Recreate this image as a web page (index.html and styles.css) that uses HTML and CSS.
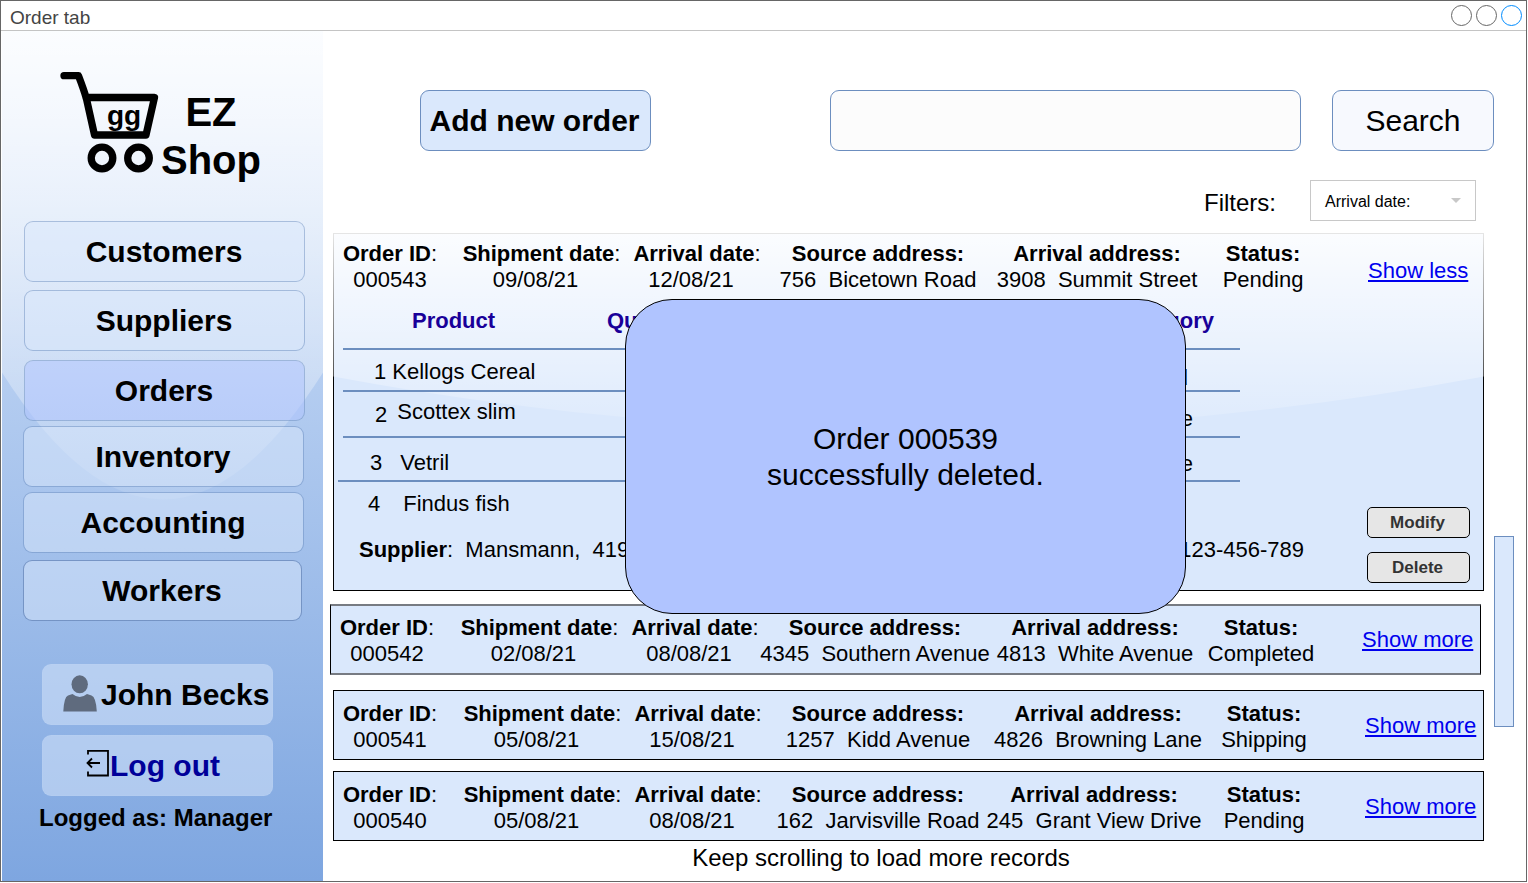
FILE: index.html
```
<!DOCTYPE html>
<html lang="en">
<head>
<meta charset="utf-8">
<title>Order tab</title>
<link rel="stylesheet" href="styles.css">
</head>
<body>
<div class="window">
  <header class="titlebar">
    <span class="title">Order tab</span>
    <div class="controls"><i class="dot"></i><i class="dot"></i><i class="dot active"></i></div>
  </header>
  <div class="content">
    <aside class="sidebar">
      <svg class="glass" viewBox="0 0 321 851" preserveAspectRatio="none">
        <defs><linearGradient id="shineA" x1="0" y1="0" x2="0" y2="1"><stop offset="0" stop-color="#fff" stop-opacity=".9"/><stop offset="1" stop-color="#fff" stop-opacity=".1"/></linearGradient></defs>
        <path d="M0 0H321V342Q160.500 596 0 342Z" fill="url(#shineA)"/>
      </svg>
      <div class="logo">
        <svg class="cart" width="101" height="110" viewBox="60 68 101 110">
          <g fill="none" stroke="#000" stroke-width="7.300" stroke-linecap="round" stroke-linejoin="round">
            <path d="M64 75.700H78.500Q84 90 86.500 99L94.500 135H146L154.500 97.500H86"/>
            <circle cx="102" cy="158" r="10.800"/><circle cx="138.500" cy="158" r="10.800"/>
          </g>
          <text x="107" y="125" class="cart-text">gg</text>
        </svg>
        <div class="brand">EZ<br>Shop</div>
      </div>
      <nav class="nav">
        <a class="nav-item">Customers</a>
        <a class="nav-item suppliers">Suppliers</a>
        <a class="nav-item current">Orders</a>
        <a class="nav-item inventory">Inventory</a>
        <a class="nav-item accounting">Accounting</a>
        <a class="nav-item workers">Workers</a>
      </nav>
      <div class="account">
        <div class="account-btn user">
          <svg width="36" height="38" viewBox="62 676 36 38"><g fill="#5f6b7e"><ellipse cx="79.700" cy="685.300" rx="8.200" ry="9"/><path d="M63.300 712.500Q64 698 68 696.500L72.500 695Q79.700 701 87 695L91.500 696.500Q96 698 96.800 712.500Z"/></g></svg>
          <span>John Becks</span>
        </div>
        <div class="account-btn logout">
          <svg width="24" height="28" viewBox="86 751.500 24 28"><g fill="none" stroke="#000" stroke-width="1.800"><path d="M88 756V752.400H108V777H88V773M100 764.500H87.500M92 760L87.500 764.500L92 769"/></g></svg>
          <span>Log out</span>
        </div>
        <div class="role">Logged as: Manager</div>
      </div>
    </aside>
    <main class="main">
      <div class="toolbar">
        <button class="add">Add new order</button>
        <div class="search-field"></div>
        <button class="search">Search</button>
      </div>
      <div class="filters">
        <span class="filters-label">Filters:</span>
        <div class="select"><span>Arrival date:</span><i class="caret"></i></div>
      </div>
      <div class="list-area">
        <div class="list">
          <section class="order expanded">
            <svg class="glass" viewBox="0 0 1151 358" preserveAspectRatio="none">
              <defs><linearGradient id="shineB" x1="0" y1="0" x2="0" y2="1"><stop offset="0" stop-color="#fff" stop-opacity=".9"/><stop offset="1" stop-color="#fff" stop-opacity=".1"/></linearGradient></defs>
              <path d="M0 0H1151V143.500Q575.500 251 0 143.500Z" fill="url(#shineB)"/>
            </svg>
            <div class="summary">
              <div class="cell id"><span><b>Order ID</b>:</span><span>000543</span></div>
              <div class="cell ship"><span><b>Shipment date</b>:</span><span>09/08/21</span></div>
              <div class="cell arr"><span><b>Arrival date</b>:</span><span>12/08/21</span></div>
              <div class="cell src"><b>Source address:</b><span>756&nbsp; Bicetown Road</span></div>
              <div class="cell dst"><b>Arrival address:</b><span>3908&nbsp; Summit Street</span></div>
              <div class="cell status"><b>Status:</b><span>Pending</span></div>
              <a class="toggle">Show less</a>
            </div>
            <div class="details">
              <div class="products">
                <div class="line head"><span class="h-product">Product</span><span class="h-qty">Quantity</span><span class="cat">Category</span></div>
                <div class="line r1"><span class="num">1</span><span class="name">Kellogs Cereal</span><span class="cat">Food</span></div>
                <div class="line r2"><span class="num">2</span><span class="name">Scottex slim</span><span class="cat">House</span></div>
                <div class="line r3"><span class="num">3</span><span class="name">Vetril</span><span class="cat">House</span></div>
                <div class="line r4"><span class="num">4</span><span class="name">Findus fish</span></div>
                <div class="supplier"><span><b>Supplier</b>:&nbsp; Mansmann,&nbsp; 419</span><span class="phone">123-456-789</span></div>
              </div>
              <div class="actions"><button class="action">Modify</button><button class="action">Delete</button></div>
            </div>
          </section>
          <section class="order second">
            <div class="summary">
              <div class="cell id"><span><b>Order ID</b>:</span><span>000542</span></div>
              <div class="cell ship"><span><b>Shipment date</b>:</span><span>02/08/21</span></div>
              <div class="cell arr"><span><b>Arrival date</b>:</span><span>08/08/21</span></div>
              <div class="cell src"><b>Source address:</b><span>4345&nbsp; Southern Avenue</span></div>
              <div class="cell dst"><b>Arrival address:</b><span>4813&nbsp; White Avenue</span></div>
              <div class="cell status"><b>Status:</b><span>Completed</span></div>
              <a class="toggle">Show more</a>
            </div>
          </section>
          <section class="order third">
            <div class="summary">
              <div class="cell id"><span><b>Order ID</b>:</span><span>000541</span></div>
              <div class="cell ship"><span><b>Shipment date</b>:</span><span>05/08/21</span></div>
              <div class="cell arr"><span><b>Arrival date</b>:</span><span>15/08/21</span></div>
              <div class="cell src"><b>Source address:</b><span>1257&nbsp; Kidd Avenue</span></div>
              <div class="cell dst"><b>Arrival address:</b><span>4826&nbsp; Browning Lane</span></div>
              <div class="cell status"><b>Status:</b><span>Shipping</span></div>
              <a class="toggle">Show more</a>
            </div>
          </section>
          <section class="order fourth">
            <div class="summary">
              <div class="cell id"><span><b>Order ID</b>:</span><span>000540</span></div>
              <div class="cell ship"><span><b>Shipment date</b>:</span><span>05/08/21</span></div>
              <div class="cell arr"><span><b>Arrival date</b>:</span><span>08/08/21</span></div>
              <div class="cell src"><b>Source address:</b><span>162&nbsp; Jarvisville Road</span></div>
              <div class="cell dst"><b>Arrival address:</b><span>245&nbsp; Grant View Drive</span></div>
              <div class="cell status"><b>Status:</b><span>Pending</span></div>
              <a class="toggle">Show more</a>
            </div>
          </section>
          <p class="more">Keep scrolling to load more records</p>
        </div>
        <div class="thumb"></div>
      </div>
    </main>
  </div>
  <div class="dialog">Order 000539<br>successfully deleted.</div>
</div>
</body>
</html>
```
FILE: styles.css
```
* { box-sizing: border-box; }
body { margin: 0; background: #fff; color: #000; font: 22px/26px "Liberation Sans", Arial, sans-serif; overflow: hidden; }
button { font: inherit; color: inherit; padding: 0; margin: 0; }

.window { position: relative; width: 1527px; height: 882px; border: 1px solid #666; display: flex; flex-direction: column; }
.titlebar { height: 30px; flex: none; border-bottom: 1px solid #c4c4c4; display: flex; justify-content: space-between; align-items: flex-start; padding: 4px 4px 0 9px; }
.title { font-size: 19px; color: #444; }
.controls { display: flex; gap: 4px; }
.dot { width: 21px; height: 21px; border: 1px solid #666; border-radius: 50%; }
.dot.active { border-color: #008cff; }
.content { flex: 1; display: flex; min-height: 0; }

.glass { position: absolute; left: 0; top: 0; width: 100%; height: 100%; }
.sidebar { position: relative; width: 321px; margin-left: 1px; flex: none; background: linear-gradient(#dae8fc, #7ea6e0); display: flex; flex-direction: column; }
.logo, .nav, .account { position: relative; }
.logo { display: flex; margin: 37px 0 0 58px; height: 110px; }
.cart-text { font-weight: bold; font-size: 28px; }
.brand { font-weight: bold; font-size: 40px; line-height: 48px; text-align: center; padding-top: 20px; }
.nav { display: flex; flex-direction: column; margin: 43px 0 0 22px; }
.nav-item { width: 281px; height: 61px; border: 1px solid rgba(108,142,191,.5); border-radius: 9px; background: rgba(218,232,252,.5); background-clip: padding-box; font-weight: bold; font-size: 30px; line-height: 60px; text-align: center; padding-right: 1px; }
.suppliers { margin-top: 8px; }
.current { margin-top: 9px; background-color: rgba(176,196,255,.5); }
.inventory { margin: 5px 0 0 -1px; }
.accounting { margin: 5px 0 0 -1px; }
.workers { margin: 7px 0 0 -1px; width: 279px; border-color: rgba(92,122,172,.6); }
.account { margin: 43px 0 0 40px; display: flex; flex-direction: column; width: 231px; }
.account-btn { height: 61px; border-radius: 9px; background: rgba(218,232,252,.5); border: 1px solid rgba(200,220,250,.15); display: flex; align-items: center; font-weight: bold; font-size: 30px; white-space: nowrap; }
.user { padding-left: 19px; }
.user svg, .logout svg { margin-top: -1px; }
.user span { margin-left: 3px; }
.logout { margin-top: 10px; padding-left: 43px; color: #000099; }
.logout svg { margin-top: -4px; }
.role { margin: 9px -10px 0 -3px; font-weight: bold; font-size: 24px; white-space: nowrap; }

.main { flex: 1; padding-top: 59px; min-width: 0; }
.toolbar { display: flex; margin-left: 97px; }
.toolbar > * { height: 61px; border: 1px solid #6c8ebf; border-radius: 9px; }
.add { width: 231px; background: #dae8fc; font-weight: bold; font-size: 30px; padding-right: 2px; }
.search-field { width: 471px; margin-left: 179px; background: #fcfcfc; }
.search { width: 162px; margin-left: 31px; background: #f7f9fe; font-size: 30px; }
.filters { display: flex; align-items: center; margin: 29px 0 0 881px; height: 41px; }
.filters-label { width: 106px; font-size: 24px; padding-top: 4px; }
.select { width: 166px; height: 41px; border: 1px solid #c8c8c8; display: flex; align-items: center; justify-content: space-between; padding: 3px 14px 0; font-size: 16px; }
.caret { border: 5px solid transparent; border-top-color: #c8c8c8; border-bottom: 0; margin-top: -4px; }

.list-area { display: flex; margin: 12px 0 0 10px; align-items: flex-start; }
.list { width: 1151px; }
.thumb { width: 20px; height: 191px; margin: 303px 0 0 10px; background: #dae8fc; border: 1px solid #6c8ebf; }
.order { position: relative; width: 1151px; height: 70px; border: 1px solid #000; background: #dae8fc; padding: 10px 0 0 9px; }
.expanded { height: 358px; padding-top: 7px; }
.expanded > .glass { left: -1px; top: -1px; width: 1151px; height: 358px; }
.second { height: 71px; margin: 13px 0 0 -3px; border-width: 2px 1px; border-color: #777b82 #000; padding-top: 9px; }
.third { margin-top: 15px; }
.fourth { margin-top: 11px; }
.summary { position: relative; display: flex; height: 52px; }
.cell { display: flex; flex: none; flex-direction: column; align-items: center; white-space: nowrap; }
.id { width: 94px; }
.ship { width: 158px; margin-left: 26.5px; }
.arr { width: 126px; margin-left: 13.5px; }
.ship span + span, .arr span + span { padding-right: 12px; }
.src { width: 172px; margin-left: 31px; }
.dst { width: 168px; margin-left: 50px; }
.status { width: 74px; margin-left: 45px; }
.toggle { margin: 12px 0 0 64px; color: #0000ee; text-decoration: underline; white-space: nowrap; }
.expanded .ship { margin-left: 25.5px; }
.expanded .src { margin-left: 32px; }
.expanded .dst { margin-left: 49px; }
.expanded .toggle { margin: 17px 0 0 68px; }
.fourth .dst { margin-left: 46px; }
.fourth .status { margin-left: 49px; }

.details { position: relative; display: flex; margin-left: -9px; padding-top: 15px; }
.products { width: 1033px; flex: none; }
.line { display: flex; align-items: flex-start; width: 897px; margin-left: 9px; border-bottom: 2px solid #6c8ebf; white-space: nowrap; }
.cat { margin-left: auto; }
.head { height: 42px; padding: 0 26px 0 69px; color: #190099; font-weight: bold; }
.h-product { width: 195px; }
.r1 { height: 42px; padding: 9px 52px 0 31px; }
.r1 .name { margin-left: 6px; }
.r1 .cat { margin-top: 6px; }
.r2 { height: 46px; padding: 10px 47px 0 32px; }
.r2 .name { margin: -3px 0 0 10px; }
.r2 .cat { margin-top: 4px; }
.r3 { height: 44px; width: 902px; margin-left: 4px; padding: 12px 47px 0 32px; }
.r3 .name { margin-left: 18px; }
.r3 .cat { margin-top: 1px; }
.r4 { height: 55px; padding: 9px 0 0 25px; border: 0; }
.r4 .name { margin-left: 23px; }
.supplier { display: flex; justify-content: space-between; margin-top: 0; padding: 0 63px 0 25px; white-space: nowrap; }
.actions { display: flex; flex-direction: column; gap: 14px; margin-top: 199px; }
.action { width: 103px; height: 31px; border: 1px solid #000; border-radius: 5px; background: #e6e6e6; color: #333; font-size: 17px; font-weight: bold; padding-right: 2px; }
.more { margin: 4px 0 0 -55px; text-align: center; font-size: 24px; }

.dialog { position: absolute; left: 624px; top: 298px; width: 561px; height: 315px; border: 1px solid #000; border-radius: 47px; background: #b0c4ff; display: flex; align-items: center; justify-content: center; text-align: center; font-size: 30px; line-height: 36px; }
```
